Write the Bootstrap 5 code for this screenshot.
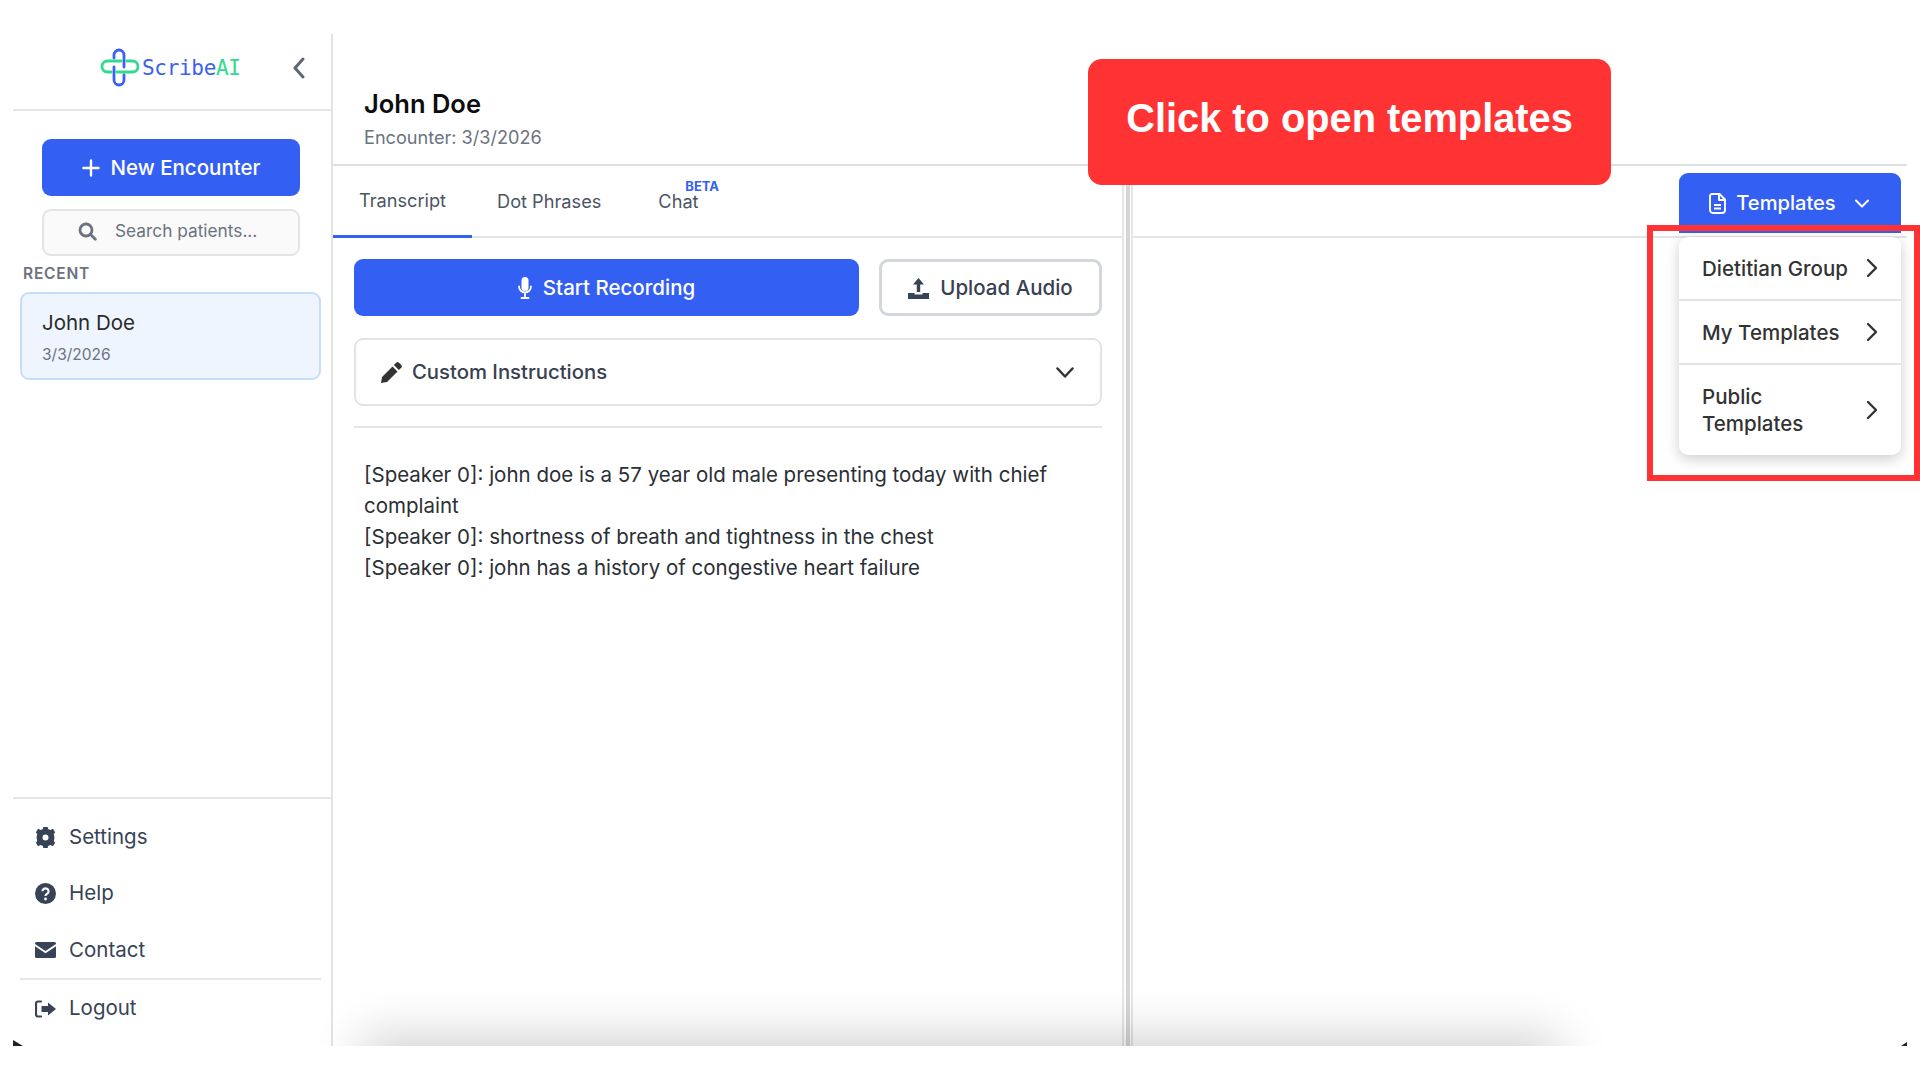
<!DOCTYPE html>
<html lang="en"><head><meta charset="utf-8"><title>ScribeAI</title>
<link href="https://cdn.jsdelivr.net/npm/bootstrap@5.3.0/dist/css/bootstrap.min.css" rel="stylesheet">
<style>
html,body{height:100%;background:#fff;overflow:hidden}
body{font-family:Inter,"Liberation Sans",sans-serif;color:#2b2f36;position:relative}
.frame{position:absolute;left:13px;right:13px;top:34px;height:1012px;overflow:hidden;display:flex;background:#fff}
.side{width:320px;flex:none;border-right:2px solid #e2e3e5;display:flex;flex-direction:column}
.logo-row{height:77px;flex:none;border-bottom:2px solid #e6e7e9;display:flex;align-items:center;position:relative;padding:0 0 7px 86px}
.logo-txt{font-family:"DejaVu Sans Mono",monospace;font-size:21px;letter-spacing:-.015em;color:#3a61f3;margin-left:3px;line-height:1}
.logo-txt span{color:#2fdc8f}
.collapse-ico{position:absolute;left:279px;top:23px}
.side-body{padding:28px 20px 0 7px;flex:1;min-height:0;display:flex;flex-direction:column}
.b-new{background:#345ff3;color:#fff;border:0;border-radius:9px;height:57px;margin:0 0 13px 22px;width:258px;padding-top:2px;font-size:20.5px;font-weight:500;display:flex;align-items:center;justify-content:center;gap:11px}
.search-box{margin-left:22px;width:258px;height:47px;border:2px solid #e4e4e4;background:#fafafa;border-radius:9px;display:flex;align-items:center;padding:0 0 3px 34px;color:#6b7280;font-size:17.3px;gap:18px}
.recent{font-size:15.5px;font-weight:600;letter-spacing:.05em;color:#6b7280;margin:8px 0 9px 3px;line-height:19px}
.pat{border:2px solid #c5ddfb;background:#eff5fe;border-radius:9px;height:88px;width:301px;padding:14px 20px}
.pat-n{font-size:20.5px;color:#2b2b2b;line-height:29px}
.pat-d{font-size:15.5px;color:#6b7280;margin-top:8px;line-height:19px}
.side-foot{border-top:2px solid #e6e7e9;height:249px;flex:none;padding:0 7px;margin-top:auto}
.nav-it{display:flex;align-items:center;gap:13px;height:56.5px;padding-left:15px;font-size:20.5px;color:#374357}
.nav-it svg{flex:none}
.foot-rule{border-top:2px solid #e6e7e9;margin:-1px 3px 0 0}
.first-it{margin-top:10px}
.last-it{margin-top:1px}
.main{flex:1;min-width:0;display:flex;flex-direction:column;position:relative}
.head{height:132px;flex:none;padding:55px 0 0 31px;border-bottom:2px solid #dfe0e2}
.head h1{font-size:25.5px;font-weight:600;color:#0d0d0d;margin:0;line-height:30px}
.head p{font-size:18.1px;color:#6b7280;margin:6px 0 0;line-height:24px}
.split{flex:1;display:flex;min-height:0}
.left{width:789px;flex:none;display:flex;flex-direction:column}
.bar{width:11px;flex:none;background:linear-gradient(90deg,#e6e6e6 0 2px,#fff 2px 3.500px,#d6d6d6 3.500px 8px,#fff 8px 9px,#e6e6e6 9px)}
.right{flex:1;position:relative}
.tabs-row{height:72px;flex:none;border-bottom:2px solid #e3e4e6;display:flex;font-size:18.2px;color:#4b5563}
.tab-a{width:139px;height:72px;border-bottom:3px solid #345ff3;padding-top:22px;text-align:center;line-height:24px}
.tab-b{margin-left:25px;padding-top:23px;line-height:24px}
.tab-c{margin-left:57px;padding-top:23px;line-height:24px;position:relative}
.beta{position:absolute;left:27px;top:12px;font-size:13px;font-weight:700;color:#345ff3;line-height:16px}
.pane{padding:21px 20px 0 21px}
.act-row{display:flex;gap:20px}
.b-rec{width:505px;height:57px;padding-top:2px;background:#345ff3;color:#fff;border:0;border-radius:9px;font-size:20.5px;font-weight:500;display:flex;align-items:center;justify-content:center;gap:11px}
.b-up{width:223px;height:57px;padding-top:2px;background:#fff;color:#374151;border:3px solid #d3d7dd;border-radius:9px;font-size:20.5px;font-weight:500;display:flex;align-items:center;justify-content:center;gap:11px}
.instr{height:68px;margin-top:22px;border:2px solid #e3e4e6;border-radius:9px;display:flex;align-items:center;padding:0 26px 0 25px;font-size:20.3px;font-weight:500;color:#374151;gap:10px}
.rule2{border-top:2px solid #e3e4e6;margin-top:20px}
.transcript{padding:31px 10px 0;font-size:20.5px;line-height:31px;color:#2b2f36}
.tpl-btn{position:absolute;left:1666px;top:139px;width:222px;height:60px;padding-right:2px;background:#345ff3;color:#fff;border-radius:9px 9px 0 0;display:flex;align-items:center;justify-content:center;font-size:20.1px;font-weight:500;gap:10px}
.tpl-chev{margin-left:9px}
.tabs-ext{position:absolute;left:0;right:0;top:70px;border-top:2px solid #e3e4e6}
.glow{position:absolute;left:39px;width:1178px;bottom:-44px;height:44px;box-shadow:0 0 50px 10px rgba(0,0,0,.18);background:#ccc}
.corner{position:absolute;bottom:0;width:0;height:0}
.c-l{left:0;border-bottom:6px solid #222;border-right:10px solid transparent}
.c-r{right:0;border-bottom:4px solid #222;border-left:6px solid transparent}
.menu{position:absolute;left:1679px;top:237px;width:222px;background:#fff;border-radius:9px;box-shadow:0 4px 14px rgba(0,0,0,.2);font-size:20.5px;font-weight:500;color:#333}
.mi{display:flex;align-items:center;justify-content:space-between;padding:0 23px;line-height:27px;border-bottom:2px solid #e3e4e6;min-height:64px}
.mi:last-child{border:0;min-height:90px}
.red-box{position:absolute;left:1647px;top:225px;width:273px;height:256px;border:6px solid #ff3333;pointer-events:none}
.callout{position:absolute;left:1088px;top:59px;width:523px;height:126px;background:#ff3333;color:#fff;border-radius:14px;font-family:"Liberation Sans",Arial,sans-serif;font-weight:700;font-size:39.8px;display:flex;align-items:center;justify-content:center;padding-bottom:6px}
</style></head><body>
<div class="frame">
  <aside class="side">
    <div class="logo-row">
      <svg width="40" height="40" viewBox="0 0 40 40" fill="none" stroke-width="2.8" stroke-linecap="round"><path d="M22 13H8.500a5.500 5.500 0 0 0 0 11H12" stroke="#2fdc8f"/><path d="M18 24h15.500a5.500 5.500 0 0 0 0-11H28" stroke="#2fdc8f"/><path d="M15 10V7a5 5 0 0 1 10 0v12" stroke="#3a61f3"/><path d="M15 19v13a5 5 0 0 0 10 0v-5" stroke="#3a61f3"/></svg>
      <span class="logo-txt">Scribe<span>AI</span></span>
      <svg class="collapse-ico" width="14" height="22" viewBox="0 0 14 22" fill="none" stroke="#5f6672" stroke-width="3" stroke-linecap="round" stroke-linejoin="round"><path d="M11 2 3 11l8 9"/></svg>
    </div>
    <div class="side-body">
      <button class="b-new"><svg width="18" height="18" viewBox="0 0 18 18" stroke="#fff" stroke-width="2.400" stroke-linecap="round"><path d="M9 1.500v15M1.500 9h15"/></svg>New Encounter</button>
      <div class="search-box"><svg width="19" height="19" viewBox="0 0 19 19" fill="none" stroke="#6b7280" stroke-width="2.800" stroke-linecap="round"><circle cx="8" cy="8" r="6"/><path d="m12.800 12.800 4.500 4.500"/></svg><span>Search patients...</span></div>
      <div class="recent">RECENT</div>
      <div class="pat"><div class="pat-n">John Doe</div><div class="pat-d">3/3/2026</div></div>
    </div>
    <div class="side-foot">
      <div class="nav-it first-it"><svg width="21" height="21" viewBox="0 0 21 21"><circle cx="10.500" cy="10.500" r="6" fill="none" stroke="#374357" stroke-width="6"/><path fill="#374357" d="M8.300 0h4.400l.6 3.500-5.600 0zM8.300 21h4.400l.6-3.500-5.600 0zM.8 5.500 3 1.800l3.300 1.400-2.800 4.900zM20.200 15.500 18 19.200l-3.300-1.400 2.800-4.900zM.8 15.500 3 19.200l3.300-1.400-2.800-4.900zM20.200 5.500 18 1.800l-3.300 1.400 2.800 4.900z"/></svg>Settings</div>
      <div class="nav-it"><svg width="21" height="21" viewBox="0 0 21 21"><circle cx="10.500" cy="10.500" r="10.500" fill="#374357"/><path d="M7.400 8.200a3.100 2.900 0 1 1 4.800 2.500c-1.200.8-1.700 1.200-1.700 2.300" fill="none" stroke="#fff" stroke-width="2.100"/><circle cx="10.500" cy="16" r="1.400" fill="#fff"/></svg>Help</div>
      <div class="nav-it"><svg width="21" height="16" viewBox="0 0 21 16"><path fill="#374357" d="M1.500 0h18A1.500 1.500 0 0 1 21 1.500v.6l-10.500 7L0 2.100v-.6A1.500 1.500 0 0 1 1.500 0zM0 4.300l10.500 7 10.500-7v10.200a1.500 1.500 0 0 1-1.500 1.500h-18A1.500 1.500 0 0 1 0 14.500z"/></svg>Contact</div>
      <div class="foot-rule"></div>
      <div class="nav-it last-it"><svg width="21" height="18" viewBox="0 0 21 18"><path d="M6 1.500H3A2 2 0 0 0 1 3.500v11a2 2 0 0 0 2 2h3" fill="none" stroke="#374357" stroke-width="2.200" stroke-linecap="round"/><path fill="#374357" d="M13 2.500 21 9l-8 6.500V12H6.500V6H13z"/></svg>Logout</div>
    </div>
  </aside>
  <main class="main">
    <header class="head"><h1>John Doe</h1><p>Encounter: 3/3/2026</p></header>
    <div class="split">
      <section class="left">
        <div class="tabs-row"><div class="tab-a">Transcript</div><div class="tab-b">Dot Phrases</div><div class="tab-c">Chat<span class="beta">BETA</span></div></div>
        <div class="pane">
          <div class="act-row">
            <button class="b-rec"><svg width="14" height="22" viewBox="0 0 14 22" fill="none"><rect x="3.500" y="0" width="7" height="14" rx="3.500" fill="#fff"/><path d="M1 9.500a6 6 0 0 0 12 0M7 15.500V20M3.500 21h7" stroke="#fff" stroke-width="1.800" stroke-linecap="round"/></svg>Start Recording</button>
            <button class="b-up"><svg width="21" height="21" viewBox="0 0 21 21"><path fill="#374357" d="M0 15h6.500v1.500h8V15H21v6H0z"/><path fill="#374357" d="M10.500 0 16 6.500h-3.800V14H8.800V6.500H5z"/></svg>Upload Audio</button>
          </div>
          <div class="instr"><svg width="21" height="21" viewBox="0 0 21 21"><path fill="#333" d="M15.200 0.800a2 2 0 0 1 2.800 0l2.200 2.200a2 2 0 0 1 0 2.800l-2.300 2.300-5-5zM11.500 4.500l5 5L6 20 0 21l1-6z"/></svg><span>Custom Instructions</span><svg class="ms-auto" width="18" height="11" viewBox="0 0 18 11" fill="none" stroke="#333" stroke-width="2.500" stroke-linecap="round" stroke-linejoin="round"><path d="m1.500 1.500 7.500 8 7.500-8"/></svg></div>
          <div class="rule2"></div>
          <div class="transcript">[Speaker 0]: john doe is a 57 year old male presenting today with chief complaint<br>[Speaker 0]: shortness of breath and tightness in the chest<br>[Speaker 0]: john has a history of congestive heart failure</div>
        </div>
      </section>
      <div class="bar"></div>
      <section class="right"><div class="tabs-ext"></div></section>
    </div>
    <div class="glow"></div>
  </main>
  <div class="corner c-l"></div><div class="corner c-r"></div>
  <div class="tpl-btn"><svg width="17" height="21" viewBox="0 0 17 21" fill="none" stroke="#fff" stroke-width="1.900" stroke-linejoin="round"><path d="M3 1h7.500L16 6.500V17a3 3 0 0 1-3 3H4a3 3 0 0 1-3-3V3a2 2 0 0 1 2-2zM10 1v6h6M5 12h7M5 15.500h7"/></svg><span>Templates</span><svg class="tpl-chev" width="14" height="9" viewBox="0 0 14 9" fill="none" stroke="#fff" stroke-width="2" stroke-linecap="round" stroke-linejoin="round"><path d="m1 1.500 6 6 6-6"/></svg></div>
</div>
<div class="menu">
  <div class="mi"><span>Dietitian Group</span><svg width="12" height="20" viewBox="0 0 12 20" fill="none" stroke="#333" stroke-width="2.400" stroke-linecap="round" stroke-linejoin="round"><path d="m2 2 8 8-8 8"/></svg></div>
  <div class="mi"><span>My Templates</span><svg width="12" height="20" viewBox="0 0 12 20" fill="none" stroke="#333" stroke-width="2.400" stroke-linecap="round" stroke-linejoin="round"><path d="m2 2 8 8-8 8"/></svg></div>
  <div class="mi"><span>Public<br>Templates</span><svg width="12" height="20" viewBox="0 0 12 20" fill="none" stroke="#333" stroke-width="2.400" stroke-linecap="round" stroke-linejoin="round"><path d="m2 2 8 8-8 8"/></svg></div>
</div>
<div class="red-box"></div>
<div class="callout">Click to open templates</div>
<script src="https://cdn.jsdelivr.net/npm/bootstrap@5.3.0/dist/js/bootstrap.bundle.min.js"></script>
</body></html>
